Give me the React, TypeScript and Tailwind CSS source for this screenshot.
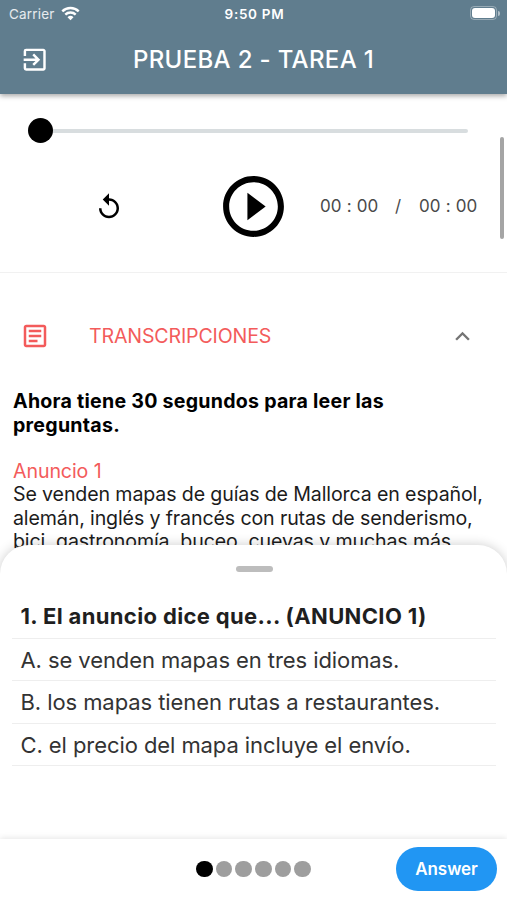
import {
  MdExpandLess,
  MdOutlineArticle,
  MdOutlineExitToApp,
  MdPlayCircleOutline,
  MdReplay,
} from "react-icons/md";

function StatusBar() {
  return (
    <div className="grid h-7 grid-cols-3 items-center pl-[9px] pr-[7px] text-[13.5px] leading-none">
      <div className="flex items-center gap-[6px] text-white/85">
        <span className="pt-px tracking-[0.2px]">Carrier</span>
        <svg width="19" height="15" viewBox="0 0 19 15" fill="none" stroke="#fff" strokeWidth="2.4" className="mb-[2px]">
          <path d="M1.3 5.4a11.6 11.6 0 0 1 16.4 0" />
          <path d="M4.3 8.7a7.4 7.4 0 0 1 10.4 0" />
          <path d="M9.5 14.2 6.5 11.2a4.3 4.3 0 0 1 6 0Z" fill="#fff" stroke="none" />
        </svg>
      </div>
      <span className="whitespace-nowrap pt-px text-center text-[13.5px] font-semibold tracking-[0.7px]">9:50 PM</span>
      <div className="flex items-center justify-end pb-[2px]">
        <div className="h-[14px] w-[27px] rounded-[4px] border border-white/35 p-[1px]">
          <div className="h-full w-full rounded-[3px] bg-white" />
        </div>
        <div className="ml-px h-[5px] w-[2px] rounded-r-full bg-white/50" />
      </div>
    </div>
  );
}

function Player() {
  return (
    <section className="h-[179px] shrink-0 border-b border-[#f1f1f1]">
      <div className="ml-[28px] mr-[39px] flex h-[73px] items-center">
        <div className="h-[25px] w-[25px] rounded-full bg-black" />
        <div className="h-[4px] flex-1 rounded-r-full bg-[#d8dddf]" />
      </div>
      <div className="flex h-[79px] items-center">
        <MdReplay className="ml-[94px] h-[30px] w-[30px]" />
        <MdPlayCircleOutline className="ml-[93px] h-[73px] w-[73px]" />
        <div className="ml-[30px] flex text-[17px] tracking-[0.15px] text-[#4a4a4a]">
          <span className="w-[75px]">00 : 00</span>
          <span className="w-[24px]">/</span>
          <span>00 : 00</span>
        </div>
      </div>
    </section>
  );
}

function Transcript() {
  return (
    <section>
      <div className="flex h-[126px] items-center text-[#f35b5b]">
        <MdOutlineArticle className="ml-[20px] h-[30px] w-[30px]" />
        <h2 className="ml-[39px] pt-[2px] text-[19.6px] tracking-[-0.15px]">TRANSCRIPCIONES</h2>
        <MdExpandLess className="ml-auto mr-[30px] h-[29px] w-[29px] text-[#757575]" />
      </div>
      <div className="-mt-[8.6px] whitespace-nowrap pl-[13px] text-[19.6px] leading-[23.35px] text-[#1c1c1c]">
        <p className="font-bold tracking-[0.25px] text-black">
          Ahora tiene 30 segundos para leer las
          <br />
          preguntas.
        </p>
        <p className="mt-[23px] tracking-[-0.1px] text-[#f35b5b]">Anuncio 1</p>
        <p className="tracking-[-0.13px]">
          Se venden mapas de guías de Mallorca en español,
          <br />
          alemán, inglés y francés con rutas de senderismo,
          <br />
          bici, gastronomía, buceo, cuevas y muchas más
        </p>
      </div>
    </section>
  );
}

const answers = [
  "A. se venden mapas en tres idiomas.",
  "B. los mapas tienen rutas a restaurantes.",
  "C. el precio del mapa incluye el envío.",
];

function QuestionSheet() {
  return (
    <section className="relative z-10 -mt-[30px] h-[323px] shrink-0 rounded-t-[29px] bg-white pl-[12px] pr-[11px] pt-[21px] shadow-[0_0_12px_rgba(0,0,0,0.2)]">
      <div className="mx-auto h-[6px] w-[37px] rounded-full bg-[#bdbdbd]" />
      <h3 className="mt-[22px] flex h-[45px] items-center whitespace-nowrap border-b border-[#eeeeee] pl-[8.5px] text-[22px] font-bold tracking-[0.36px] text-[#1f1f1f]">
        1. El anuncio dice que... (ANUNCIO 1)
      </h3>
      <ul className="whitespace-nowrap text-[22px] tracking-[-0.08px] text-[#333]">
        {answers.map((answer) => (
          <li key={answer} className="flex h-[42.3px] items-center border-b border-[#eeeeee] pl-[8.5px] pt-[2px]">
            {answer}
          </li>
        ))}
      </ul>
    </section>
  );
}

function BottomBar() {
  return (
    <footer className="relative z-20 grid h-[61px] shrink-0 grid-cols-[1fr_auto_1fr] items-center bg-white shadow-[0_-1px_6px_rgba(0,0,0,0.1)]">
      <div className="col-start-2 flex gap-[3.2px]">
        <i className="h-[16.5px] w-[16.5px] rounded-full bg-black" />
        {[1, 2, 3, 4, 5].map((page) => (
          <i key={page} className="h-[16.5px] w-[16.5px] rounded-full bg-[#9e9e9e]" />
        ))}
      </div>
      <button className="mr-[10px] h-[44px] w-[101px] justify-self-end rounded-full bg-[#2196f3] pt-[2px] text-[17px] font-semibold tracking-[-0.05px] text-white">
        Answer
      </button>
    </footer>
  );
}

export default function App() {
  return (
    <main className="relative flex h-[900px] w-[507px] flex-col overflow-hidden bg-white font-['Inter',sans-serif] text-black">
      <header className="relative z-10 h-[94px] shrink-0 bg-[#607d8e] text-white shadow-[0_2px_5px_rgba(0,0,0,0.35)]">
        <StatusBar />
        <div className="grid h-[64px] grid-cols-[60px_1fr_60px] items-center">
          <MdOutlineExitToApp className="ml-[20px] h-[29.4px] w-[29.4px]" />
          <h1 className="whitespace-nowrap text-center text-[24px] font-medium tracking-[0.33px]">
            PRUEBA 2 - TAREA 1
          </h1>
        </div>
      </header>
      <div className="h-[481px] shrink-0 overflow-hidden">
        <Player />
        <Transcript />
      </div>
      <QuestionSheet />
      <div className="-mt-[29.5px] shrink-0">
        <BottomBar />
      </div>
      <div className="absolute right-[3px] top-[137px] h-[102px] w-[4px] rounded-full bg-[#a5a5a5]" />
    </main>
  );
}
